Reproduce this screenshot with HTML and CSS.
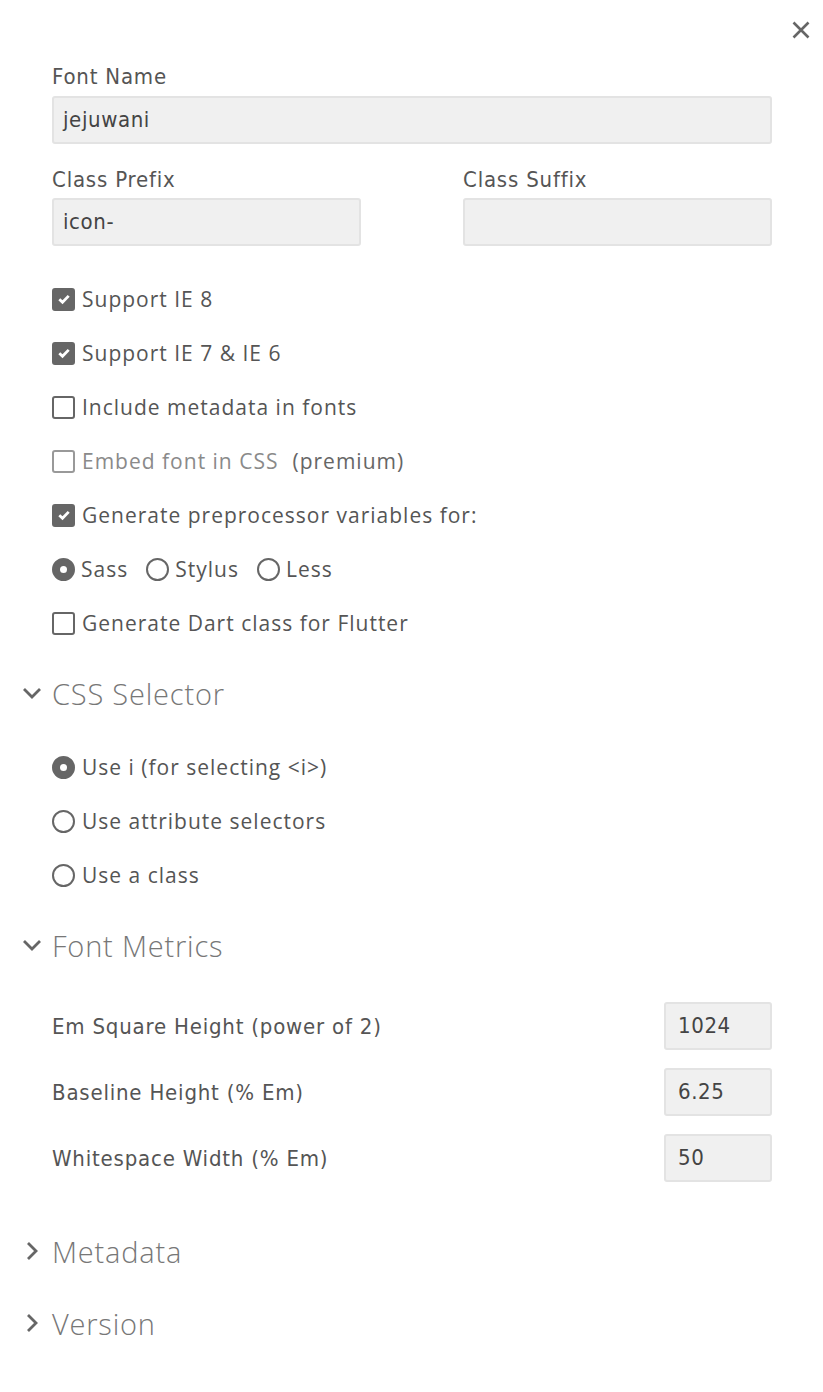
FILE: index.html
```html
<!DOCTYPE html>
<html>
<head>
<meta charset="utf-8">
<link rel="stylesheet" href="styles.css">
</head>
<body>
<div class="panel">
  <div class="topbar">
    <button class="close" aria-label="Close">
      <svg width="18" height="18" viewBox="0 0 18 18"><path d="M1.5 1.5 L16.5 16.5 M16.5 1.5 L1.5 16.5" stroke="#666" stroke-width="2.6" stroke-linecap="butt"/></svg>
    </button>
  </div>
  <div class="content">
    <div class="field first">
      <div class="label">Font Name</div>
      <div class="input">jejuwani</div>
    </div>
    <div class="field-row">
      <div class="field">
        <div class="label">Class Prefix</div>
        <div class="input">icon-</div>
      </div>
      <div class="field">
        <div class="label">Class Suffix</div>
        <div class="input"></div>
      </div>
    </div>
    <div class="options">
      <div class="opt"><span class="cb on"><svg viewBox="0 0 22 22" width="22" height="22"><path d="M6.3 11.3 L9.5 14.3 L15.7 7.9" fill="none" stroke="#fff" stroke-width="2.8"/></svg></span>Support IE 8</div>
      <div class="opt"><span class="cb on"><svg viewBox="0 0 22 22" width="22" height="22"><path d="M6.3 11.3 L9.5 14.3 L15.7 7.9" fill="none" stroke="#fff" stroke-width="2.8"/></svg></span>Support IE 7 &amp; IE 6</div>
      <div class="opt"><span class="cb"></span>Include metadata in fonts</div>
      <div class="opt disabled"><span class="cb"></span>Embed font in CSS<span class="prem">(premium)</span></div>
      <div class="opt"><span class="cb on"><svg viewBox="0 0 22 22" width="22" height="22"><path d="M6.3 11.3 L9.5 14.3 L15.7 7.9" fill="none" stroke="#fff" stroke-width="2.8"/></svg></span>Generate preprocessor variables for:</div>
      <div class="opt radios">
        <span class="ritem"><span class="rb on"></span>Sass</span>
        <span class="ritem"><span class="rb"></span>Stylus</span>
        <span class="ritem"><span class="rb"></span>Less</span>
      </div>
      <div class="opt"><span class="cb"></span>Generate Dart class for Flutter</div>
    </div>
  </div>

  <div class="section-head">
    <svg class="chev" width="20" height="14" viewBox="0 0 20 14"><path d="M2 3 L10 11 L18 3" fill="none" stroke="#666" stroke-width="2.8"/></svg>
    <span>CSS Selector</span>
  </div>
  <div class="content">
    <div class="options">
      <div class="opt"><span class="rb on"></span>Use i (for selecting &lt;i&gt;)</div>
      <div class="opt"><span class="rb"></span>Use attribute selectors</div>
      <div class="opt"><span class="rb"></span>Use a class</div>
    </div>
  </div>

  <div class="section-head">
    <svg class="chev" width="20" height="14" viewBox="0 0 20 14"><path d="M2 3 L10 11 L18 3" fill="none" stroke="#666" stroke-width="2.8"/></svg>
    <span>Font Metrics</span>
  </div>
  <div class="content metrics">
    <div class="mrow"><span class="mlabel">Em Square Height (power of 2)</span><div class="input small">1024</div></div>
    <div class="mrow"><span class="mlabel">Baseline Height (% Em)</span><div class="input small">6.25</div></div>
    <div class="mrow"><span class="mlabel">Whitespace Width (% Em)</span><div class="input small">50</div></div>
  </div>

  <div class="section-head collapsed first-collapsed">
    <svg class="chev right" width="20" height="22" viewBox="0 0 20 22"><path d="M6 3 L14 11 L6 19" fill="none" stroke="#666" stroke-width="2.8"/></svg>
    <span>Metadata</span>
  </div>
  <div class="section-head collapsed">
    <svg class="chev right" width="20" height="22" viewBox="0 0 20 22"><path d="M6 3 L14 11 L6 19" fill="none" stroke="#666" stroke-width="2.8"/></svg>
    <span>Version</span>
  </div>
</div>
</body>
</html>
```

FILE: styles.css
```css
* { box-sizing: border-box; }
html, body { margin: 0; padding: 0; background: #fff; }
body {
  font-family: "Open Sans", "Noto Sans", sans-serif;
  color: #555;
  width: 823px;
  height: 1392px;
  overflow: hidden;
}
.topbar {
  height: 60px;
  display: flex;
  justify-content: flex-end;
  align-items: center;
  padding-right: 12px;
}
.close {
  border: 0;
  background: none;
  padding: 0;
  width: 20px;
  height: 20px;
  display: flex;
  align-items: center;
  justify-content: center;
}
.content {
  padding: 0 51px 0 52px;
}
.field.first { margin-top: 5px; }
.label {
  font-family: "DejaVu Sans Condensed", "DejaVu Sans", sans-serif;
  font-stretch: condensed;
  font-size: 22px;
  letter-spacing: 0.8px;
  line-height: 24px;
  height: 24px;
  color: #555;
}
.input {
  margin-top: 7px;
  height: 48px;
  background: #f0f0f0;
  border: 2px solid #e3e3e3;
  border-radius: 3px;
  font-family: "DejaVu Sans Condensed", "DejaVu Sans", sans-serif;
  font-stretch: condensed;
  font-size: 22px;
  letter-spacing: 0.6px;
  line-height: 44px;
  padding: 0 9px;
  color: #444;
}
.field-row {
  display: grid;
  grid-template-columns: 309px 309px;
  justify-content: space-between;
  margin-top: 24px;
}
.field-row .input { margin-top: 6px; }
.options { margin-top: 26px; }
.opt {
  height: 54px;
  display: flex;
  align-items: center;
  font-size: 21px;
  letter-spacing: 1px;
  color: #555;
  white-space: nowrap;
}
.cb {
  width: 23px;
  height: 23px;
  border: 2px solid #666;
  border-radius: 3px;
  margin-right: 7px;
  flex: none;
  display: inline-flex;
  align-items: center;
  justify-content: center;
}
.cb.on { background: #666; }
.cb svg { display: block; margin: -2px; }
.opt.disabled { color: #8a8a8a; }
.opt.disabled .cb { border-color: #999; }
.opt.disabled .prem { color: #666; margin-left: 14px; }
.rb {
  width: 23px;
  height: 23px;
  border: 2.5px solid #666;
  border-radius: 50%;
  margin-right: 7px;
  flex: none;
  display: inline-flex;
  align-items: center;
  justify-content: center;
}
.rb.on { background: #666; }
.rb.on::after {
  content: "";
  width: 7px;
  height: 7px;
  background: #fff;
  border-radius: 50%;
}
.radios .ritem {
  display: inline-flex;
  align-items: center;
  margin-right: 18px;
}
.radios .ritem .rb { margin-right: 6px; }
.section-head {
  height: 54px;
  margin-top: 16px;
  display: flex;
  align-items: center;
  padding-left: 22px;
  font-family: "Open Sans", "Noto Sans", sans-serif;
  font-weight: 300;
  font-size: 29px;
  letter-spacing: 0.8px;
  color: #777;
}
.section-head .chev { flex: none; margin-right: 10px; }
.section-head + .content .options { margin-top: 20px; }
.metrics { margin-top: 30px; display: flex; flex-direction: column; gap: 18px; }
.mrow {
  display: flex;
  justify-content: space-between;
  align-items: center;
  height: 48px;
}
.mlabel {
  font-family: "DejaVu Sans Condensed", "DejaVu Sans", sans-serif;
  font-stretch: condensed;
  font-size: 22px;
  letter-spacing: 0.8px;
  color: #555;
}
.input.small {
  margin-top: 0;
  width: 108px;
  padding: 0 12px;
}
.first-collapsed { margin-top: 42px; }
.collapsed + .collapsed { margin-top: 18px; }
```
